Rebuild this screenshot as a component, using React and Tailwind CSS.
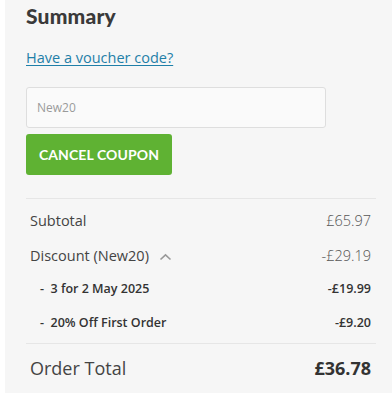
import React from 'react';

function Row({ label, value, className = '', valueClass = '', children }) {
  return (
    <div className={`flex items-center justify-between ${className}`}>
      <div className="flex items-center">
        <span>{label}</span>
        {children}
      </div>
      <span className={valueClass}>{value}</span>
    </div>
  );
}

export default function App() {
  return (
    <div className="w-[392px] h-[397px] bg-white pl-[5px]" style={{ fontFamily: '"Open Sans", sans-serif' }}>
      <div className="h-[393px] bg-[#f6f6f6] pl-[21px] pr-[16px] pt-[3px]">
        <h2 className="text-[21px] font-black text-[#3a3a3a] leading-[26px] tracking-[0.2px]" style={{ fontFamily: 'Lato, sans-serif' }}>
          Summary
        </h2>
        <a href="#" className="mt-[19px] block w-fit text-[14.5px] leading-[20px] text-[#1f7fa8] underline underline-offset-2">
          Have a voucher code?
        </a>
        <input
          readOnly
          value="New20"
          className="mt-[19px] block w-[300px] h-[41px] rounded-[3px] border border-[#dedede] bg-[#fafafa] px-[10px] text-[12px] text-[#9a9a9a] outline-none"
        />
        <button
          className="mt-[6px] h-[41px] w-[146px] rounded-[3px] bg-[#5fb233] text-[14px] font-bold text-white tracking-[0.1px]"
          style={{ fontFamily: 'Lato, sans-serif' }}
        >
          CANCEL COUPON
        </button>
        <div className="mt-[23px] border-t border-[#e6e6e6] pl-[4px] pr-[5px] text-[#444]">
          <Row label="Subtotal" value="£65.97" valueClass="font-light text-[#555]" className="mt-[11px] h-[22px] text-[14.5px]" />
          <Row label="Discount (New20)" value="-£29.19" valueClass="font-light text-[#555]" className="mt-[13px] h-[22px] text-[14.5px]">
            <svg className="ml-[10px] mt-[1px]" width="13" height="8" viewBox="0 0 13 8" fill="none">
              <path d="M1.5 6.5L6.5 1.8L11.5 6.5" stroke="#999" strokeWidth="1.6" />
            </svg>
          </Row>
          <Row label="-  3 for 2 May 2025" value="-£19.99" className="mt-[11px] h-[22px] pl-[10px] text-[12.5px] font-semibold text-[#333] whitespace-pre" />
          <Row label="-  20% Off First Order" value="-£9.20" className="mt-[12px] h-[22px] pl-[10px] text-[12.5px] font-semibold text-[#333] whitespace-pre" />
        </div>
        <div className="mt-[9px] border-t border-[#e6e6e6] pl-[4px] pr-[5px]">
          <div className="mt-[11px] flex items-center justify-between h-[26px] text-[#444]">
            <span className="text-[18px]">Order Total</span>
            <span className="text-[18px] font-bold text-[#333]">£36.78</span>
          </div>
        </div>
      </div>
    </div>
  );
}
